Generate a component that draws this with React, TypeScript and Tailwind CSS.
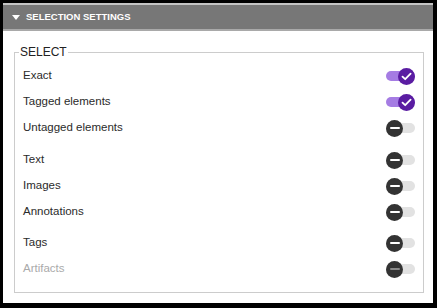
import React from 'react';

type Row = { label: string; on?: boolean; disabled?: boolean };

const groups: Row[][] = [
  [
    { label: 'Exact', on: true },
    { label: 'Tagged elements', on: true },
    { label: 'Untagged elements' },
  ],
  [{ label: 'Text' }, { label: 'Images' }, { label: 'Annotations' }],
  [{ label: 'Tags' }, { label: 'Artifacts', disabled: true }],
];

const Toggle = ({ on, disabled }: { on?: boolean; disabled?: boolean }) => (
  <div className="relative w-[29px] h-[17px] flex items-center">
    <div className={`w-full h-[10px] rounded-full ${on ? 'bg-[#a57ce3]' : 'bg-[#e2e2e2]'}`} />
    {on ? (
      <div className="absolute right-0 top-0 w-[17px] h-[17px] rounded-full bg-[#5a1ca2] flex items-center justify-center">
        <svg width="11" height="9" viewBox="0 0 11 9" fill="none">
          <path d="M1.5 4.6 L4.2 7.2 L9.6 1.6" stroke="#fff" strokeWidth="1.8" strokeLinecap="round" strokeLinejoin="round" />
        </svg>
      </div>
    ) : (
      <div className="absolute left-0 top-0 w-[17px] h-[17px] rounded-full bg-[#333333] flex items-center justify-center">
        <div className={`w-[10px] h-[2px] rounded-sm ${disabled ? 'bg-[#8a8a8a]' : 'bg-white'}`} />
      </div>
    )}
  </div>
);

export default function App() {
  return (
    <div className="w-[437px] h-[308px] bg-black pt-[3px] pl-[3px] font-['Liberation_Sans',Arial,sans-serif]">
      <div className="w-[430px] h-[300px] bg-white flex flex-col">
        {/* Header */}
        <div className="h-[28px] bg-[#777777] border-t-2 border-b-2 border-t-[#c4c4c4] border-b-[#a9a9a9] flex items-center pl-[9px] gap-[6px]">
          <svg width="8" height="5" viewBox="0 0 8 5">
            <path d="M0 0 L8 0 L4 5 Z" fill="#fff" />
          </svg>
          <span className="text-white font-bold text-[9.5px] leading-none">SELECTION SETTINGS</span>
        </div>

        {/* Select fieldset */}
        <fieldset className="mt-[14px] ml-[11px] w-[410px] border border-[#cccccc] px-[8px] pt-[4px] pb-[10px]">
          <legend className="-ml-[4px] px-[1px] text-[12px] leading-[14px] text-[#222]">SELECT</legend>
          {groups.map((g, gi) => (
            <div key={gi} className={gi === 1 ? 'mt-[6px]' : gi === 2 ? 'mt-[5px]' : ''}>
              {g.map((r) => (
                <div key={r.label} className="h-[26px] flex items-center justify-between">
                  <span className={`text-[11.5px] ${r.disabled ? 'text-[#aaaaaa]' : 'text-[#2b2b2b]'}`}>{r.label}</span>
                  <Toggle on={r.on} disabled={r.disabled} />
                </div>
              ))}
            </div>
          ))}
        </fieldset>
      </div>
    </div>
  );
}
